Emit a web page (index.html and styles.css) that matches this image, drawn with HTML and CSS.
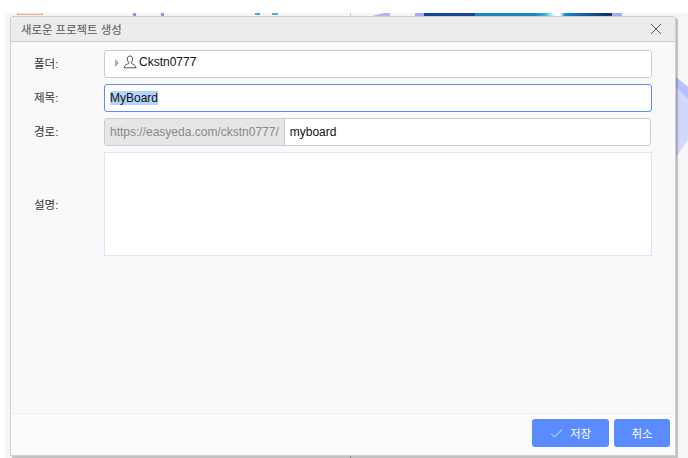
FILE: index.html
```html
<!DOCTYPE html>
<html lang="ko">
<head>
    <meta charset="UTF-8">
    <title>새로운 프로젝트 생성</title>
    <link rel="stylesheet" href="styles.css">
</head>
<body>

<!-- Page behind the dialog, only slivers of it show -->
<div class="backdrop">
    <span class="bit bit-orange"></span>
    <span class="bit bit-purple-1"></span>
    <span class="bit bit-purple-2"></span>
    <span class="bit bit-blue-1"></span>
    <span class="bit bit-blue-2"></span>
    <span class="bit bit-line"></span>
    <span class="bit bit-line-bottom"></span>
    <svg class="bit bit-lilac" width="18" height="3" viewBox="0 0 18 3">
        <path d="M0 3L12 0H18V3Z" fill="#b3b3fb"/>
    </svg>
    <span class="bit bit-banner"></span>
    <svg class="bit bit-arc" width="12" height="80" viewBox="0 0 12 80">
        <path d="M0 0L12 10V63L0 80Z" fill="#d3d7fc"/>
        <path d="M0 0L12 10V22L0 10Z" fill="#b9c1fa"/>
    </svg>
</div>

<div class="dialog">
    <div class="dialog-header">
        <span class="dialog-title">새로운 프로젝트 생성</span>
        <svg class="close-icon" width="12" height="12" viewBox="0 0 12 12">
            <path d="M1 1L11 11M11 1L1 11" stroke="#555" stroke-width="1" fill="none"/>
        </svg>
    </div>

    <div class="dialog-body">
        <div class="row">
            <label class="row-label">폴더:</label>
            <div class="field tree">
                <span class="tree-arrow"></span>
                <svg class="user-icon" width="14" height="14" viewBox="0 0 14 14">
                    <path d="M7 1C5.300 1 4.300 2.300 4.300 4C4.300 5.500 5 6.600 5.700 7.300V8.400C4.500 9.300 1.500 9.700 1 12.800H13C12.500 9.700 9.500 9.300 8.300 8.400V7.300C9 6.600 9.700 5.500 9.700 4C9.700 2.300 8.700 1 7 1Z" stroke="#555" stroke-width="1" fill="none"/>
                </svg>
                <span>Ckstn0777</span>
            </div>
        </div>

        <div class="row">
            <label class="row-label">제목:</label>
            <div class="field title-field"><span class="selected">MyBoard</span></div>
        </div>

        <div class="row">
            <label class="row-label">경로:</label>
            <div class="field path-field">
                <span class="path-prefix">https://easyeda.com/ckstn0777/</span>
                <span class="path-value">myboard</span>
            </div>
        </div>

        <div class="row row-desc">
            <label class="row-label">설명:</label>
            <div class="field desc-field"></div>
        </div>
    </div>

    <div class="dialog-footer">
        <button class="btn btn-save">
            <svg width="13" height="10" viewBox="0 0 13 10">
                <path d="M1 5.500L4.500 9L12 1.500" stroke="#dfe8ff" stroke-width="1" fill="none"/>
            </svg>
            저장
        </button>
        <button class="btn btn-cancel">취소</button>
    </div>
</div>

</body>
</html>
```

FILE: styles.css
```css
html, body {
    margin: 0;
    padding: 0;
    height: 100%;
    overflow: hidden;
}
body {
    font-family: "Liberation Sans", "Noto Sans CJK KR", sans-serif;
    font-size: 12px;
    color: #111;
    background-color: white;
}

/* Background page */
.backdrop {
    position: absolute;
    left: 5px;
    right: 0;
    top: 13px;
    bottom: 0;
    background-color: #f6f6f6;
}
.bit {
    position: absolute;
    top: 0;
    height: 3px;
}
.bit-orange {
    left: 12px;
    width: 24px;
    height: 1px;
    background-color: #fbe5dc;
    border-left: 1px solid #f5a58c;
    border-right: 1px solid #f5a58c;
    border-bottom: 1px solid #f5a58c;
}
.bit-purple-1 { left: 128px; width: 3px; background-color: #b280f5; }
.bit-purple-2 { left: 156px; width: 3px; background-color: #b280f5; }
.bit-blue-1 { left: 250px; width: 5px; height: 2px; background-color: #4da6f0; }
.bit-blue-2 { left: 267px; width: 6px; height: 2px; background-color: #4da6f0; }
.bit-line { left: 345px; width: 1px; background-color: #ccc; }
.bit-line-bottom {
    left: 345px;
    top: auto;
    bottom: 0;
    width: 1px;
    background-color: #aaa;
}
.bit-lilac { left: 367px; }
.bit-banner {
    left: 410px;
    width: 207px;
    background: linear-gradient(90deg, #a9a9f8 0 9px, #16468f 9px 60px, #1a86c9 60px 120px, #37b4e0 130px, #fff 140px 145px, #1a86c9 150px, #16346f 190px 197px, #a9a9f8 197px);
}
.bit-arc {
    left: 671px;
    top: 64px;
    height: 80px;
}

/* Dialog */
.dialog {
    position: absolute;
    left: 10px;
    top: 16px;
    width: 664px;
    height: 438px;
    display: flex;
    flex-direction: column;
    background-color: #f9f9f9;
    border: 1px solid #cfcfcf;
    border-radius: 3px 3px 0 0;
    box-shadow: 2px 2px 1px rgba(0, 0, 0, 0.22);
}
.dialog-header {
    height: 24px;
    flex-shrink: 0;
    display: flex;
    align-items: center;
    justify-content: space-between;
    padding: 0 13px 0 10px;
    background-color: #ececec;
    border-bottom: 1px solid #cfcfcf;
}
.dialog-title {
    font-size: 11.400px;
    color: #555;
}
.dialog-body {
    flex: 1;
    display: flex;
    flex-direction: column;
    gap: 6px;
    padding: 8px 23px 0 23px;
}
.row {
    display: flex;
    align-items: center;
    height: 28px;
}
.row-desc {
    height: 104px;
}
.row-label {
    width: 70px;
    flex-shrink: 0;
    padding-bottom: 2px;
    color: #333;
    font-size: 11.500px;
}
.row-desc .row-label {
    padding-bottom: 0;
}

/* Fields */
.field {
    flex: 1;
    height: 100%;
    box-sizing: border-box;
    display: flex;
    align-items: center;
    background-color: white;
    border: 1px solid #ccc;
    border-radius: 3px;
}
.tree {
    padding: 0 0 5px 10px;
}
.tree-arrow {
    width: 0;
    height: 0;
    margin-top: 3px;
    margin-right: 4px;
    border-left: 4px solid #aaa;
    border-top: 4px solid transparent;
    border-bottom: 4px solid transparent;
}
.user-icon {
    margin-right: 2px;
}
.title-field {
    padding-left: 5px;
    border-color: #5a8cff;
}
.selected {
    background-color: #b4d5fe;
}
.path-field {
    margin-right: 1px;
    overflow: hidden;
}
.path-prefix {
    height: 100%;
    display: flex;
    align-items: center;
    padding: 0 5px;
    color: #888;
    background-color: #e6e6e6;
    box-shadow: inset 1px 1px 0 #e0e8f8, inset 0 -1px 0 #e0e8f8;
    border-right: 1px solid #ccc;
}
.path-value {
    padding-left: 5px;
}
.desc-field {
    border-color: #e3e0fb;
    border-radius: 0;
}

/* Footer */
.dialog-footer {
    height: 42px;
    flex-shrink: 0;
    box-sizing: border-box;
    display: flex;
    justify-content: flex-end;
    gap: 5px;
    padding: 5px 5px 0 0;
    background-color: #fbfbfb;
    border-top: 1px solid #eee;
}
.btn {
    height: 28px;
    display: flex;
    align-items: center;
    justify-content: center;
    gap: 7px;
    padding: 0;
    color: white;
    font-family: inherit;
    font-size: 11.500px;
    background-color: #5a8cff;
    border: none;
    border-radius: 3px;
}
.btn-save {
    width: 77px;
}
.btn-cancel {
    width: 56px;
}
```
